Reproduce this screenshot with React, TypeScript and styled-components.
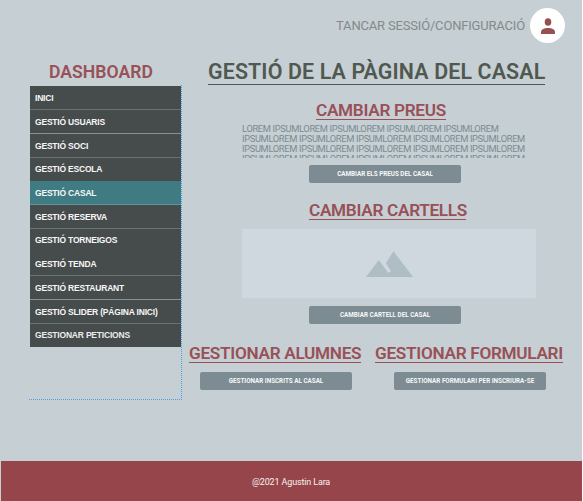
import React from "react";
import styled, { createGlobalStyle } from "styled-components";

const GlobalStyle = createGlobalStyle`
  *, *::before, *::after { box-sizing: border-box; }
  html, body { margin: 0; padding: 0; background: #fff; overflow: hidden; }
  body { font-family: Roboto, "Liberation Sans", sans-serif; }
  h1, h2, p, ul { margin: 0; padding: 0; }
`;

const Page = styled.div`
  width: 582px;
  height: 501px;
  display: flex;
  flex-direction: column;
  background: #c5cfd4;
  overflow: hidden;
  white-space: nowrap;
`;

const TopBar = styled.header`
  height: 51px;
  flex: none;
  display: flex;
  justify-content: flex-end;
  align-items: center;
  padding-right: 17px;
  gap: 5px;
`;

const SessionLink = styled.span`
  font-size: 13px;
  line-height: 16px;
  letter-spacing: -0.18px;
  color: #86898a;
`;

const Avatar = styled.div`
  width: 35px;
  height: 35px;
  border-radius: 50%;
  background: #fff;
  display: grid;
  place-items: center;
`;

const Body = styled.div`
  height: 410px;
  flex: none;
  display: flex;
  align-items: flex-start;
`;

const Sidebar = styled.aside`
  width: 153px;
  margin-left: 29px;
`;

const SidebarTitle = styled.h2`
  height: 34px;
  padding: 11px 9px 0 0;
  text-align: center;
  font-size: 17.6px;
  line-height: 21px;
  font-weight: 600;
  letter-spacing: 0.05px;
  color: #995056;
`;

const NavFrame = styled.nav`
  height: 315px;
  padding: 1px 0 0 1px;
  border-right: 1px dotted #4c9fe6;
  border-bottom: 1px dotted #4c9fe6;
`;

const NavList = styled.ul`
  list-style: none;
  display: grid;
  grid-template-rows: 24px 24px 24px 23px 24px 24px 23px 24px 24px 24px 23px;
`;

const NavItem = styled.li<{ $active?: boolean; $line?: string }>`
  display: flex;
  align-items: center;
  padding-left: 5px;
  background: ${(p) => (p.$active ? "#3e7b82" : "#464b4b")};
  border-bottom: 1px solid ${(p) => p.$line ?? "transparent"};
  font: bold 8.5px/12px "Liberation Sans", Arial, sans-serif;
  letter-spacing: -0.2px;
  color: ${(p) => (p.$line ? "#f7f7f7" : "#ececec")};
`;

const Main = styled.main`
  flex: 1;
  display: flex;
  flex-direction: column;
`;

const PageTitle = styled.h1`
  width: 337px;
  height: 25px;
  margin: 9px 0 0 26px;
  font-size: 21.4px;
  line-height: 24px;
  font-weight: 600;
  letter-spacing: 0.13px;
  color: #50584f;
  border-bottom: 1px solid #50584f;
`;

const Column = styled.div`
  width: 294px;
  margin-left: 60px;
  display: flex;
  flex-direction: column;
`;

const SectionTitle = styled.h2<{ $w: number; $indent?: number }>`
  width: ${(p) => p.$w}px;
  height: 20px;
  margin-left: ${(p) => p.$indent ?? 0}px;
  font-size: 17.2px;
  line-height: 21px;
  font-weight: 600;
  letter-spacing: -0.3px;
  color: #995056;
  border-bottom: 1px solid #995056;
`;

const Section = styled.section<{ $top: number }>`
  margin-top: ${(p) => p.$top}px;
`;

const Description = styled.p`
  width: 294px;
  height: 34px;
  margin: 4px 0 7px;
  overflow: hidden;
  font-size: 9.3px;
  line-height: 10px;
  letter-spacing: -0.33px;
  color: #7c8b91;
`;

const Button = styled.button<{ $indent: number }>`
  display: block;
  width: 152px;
  height: 18px;
  margin: 0 0 0 ${(p) => p.$indent}px;
  padding: 0;
  border: 0;
  border-radius: 2px;
  background: #7c8c92;
  color: #f7f9fa;
  font: 700 6.3px/18px Roboto, sans-serif;
  text-align: center;
`;

const Placeholder = styled.div`
  width: 294px;
  height: 69px;
  margin: 9px 0 8px;
  background: #cfd8df;
  display: grid;
  place-items: center;
`;

const ActionRow = styled.div`
  display: flex;
  gap: 14px;
  margin: 19px 0 0 7px;
`;

const Action = styled.section`
  display: grid;
  gap: 9px;
`;

const Footer = styled.footer`
  height: 40px;
  flex: none;
  margin-left: 1px;
  background: #96454a;
  color: #f6f1f1;
  font-size: 9px;
  line-height: 42px;
  letter-spacing: -0.15px;
  padding-right: 1px;
  text-align: center;
`;

const navItems: { label: string; line?: string; active?: boolean }[] = [
  { label: "INICI", line: "#6b7071" },
  { label: "GESTIÓ USUARIS", line: "#8b9092" },
  { label: "GESTIÓ SOCI", line: "#6b7071" },
  { label: "GESTIÓ ESCOLA", line: "#464b4b" },
  { label: "GESTIÓ CASAL", line: "#649299", active: true },
  { label: "GESTIÓ RESERVA", line: "#6b7071" },
  { label: "GESTIÓ TORNEIGOS", line: "#464b4b" },
  { label: "GESTIÓ TENDA", line: "#6b7071" },
  { label: "GESTIÓ RESTAURANT", line: "#8b9092" },
  { label: "GESTIÓ SLIDER (PÁGINA INICI)", line: "#6b7071" },
  { label: "GESTIONAR PETICIONS" },
];

const PersonIcon = () => (
  <svg width="14" height="16" viewBox="0 0 14 16" fill="#965050">
    <ellipse cx="7" cy="4" rx="3.3" ry="3.8" />
    <path d="M0 16v-2c0-2.600 3.600-4 7-4s7 1.400 7 4v2z" />
  </svg>
);

const MountainIcon = () => (
  <svg width="47" height="26" viewBox="0 0 47 26" fill="#afbdc4">
    <path d="M0 26 12.800 9 22 21.500Q23.500 22 25 20L19.800 12 27.500 0.300 47 26z" />
  </svg>
);

export default function App() {
  return (
    <>
      <GlobalStyle />
      <Page>
        <TopBar>
          <SessionLink>TANCAR SESSIÓ/CONFIGURACIÓ</SessionLink>
          <Avatar><PersonIcon /></Avatar>
        </TopBar>
        <Body>
          <Sidebar>
            <SidebarTitle>DASHBOARD</SidebarTitle>
            <NavFrame>
              <NavList>
                {navItems.map((item) => (
                  <NavItem key={item.label} $active={item.active} $line={item.line}>
                    {item.label}
                  </NavItem>
                ))}
              </NavList>
            </NavFrame>
          </Sidebar>
          <Main>
            <PageTitle>GESTIÓ DE LA PÀGINA DEL CASAL</PageTitle>
            <Column>
              <Section $top={15}>
                <SectionTitle $w={130} $indent={74}>CAMBIAR PREUS</SectionTitle>
                <Description>
                  LOREM IPSUMLOREM IPSUMLOREM IPSUMLOREM IPSUMLOREM<br />
                  IPSUMLOREM IPSUMLOREM IPSUMLOREM IPSUMLOREM IPSUMLOREM<br />
                  IPSUMLOREM IPSUMLOREM IPSUMLOREM IPSUMLOREM IPSUMLOREM<br />
                  IPSUMLOREM IPSUMLOREM IPSUMLOREM IPSUMLOREM IPSUMLOREM
                </Description>
                <Button $indent={67}>CAMBIAR ELS PREUS DEL CASAL</Button>
              </Section>
              <Section $top={17}>
                <SectionTitle $w={157} $indent={67}>CAMBIAR CARTELLS</SectionTitle>
                <Placeholder><MountainIcon /></Placeholder>
                <Button $indent={67}>CAMBIAR CARTELL DEL CASAL</Button>
              </Section>
            </Column>
            <ActionRow>
              <Action>
                <SectionTitle $w={172}>GESTIONAR ALUMNES</SectionTitle>
                <Button $indent={11}>GESTIONAR INSCRITS AL CASAL</Button>
              </Action>
              <Action>
                <SectionTitle $w={188}>GESTIONAR FORMULARI</SectionTitle>
                <Button $indent={19}>GESTIONAR FORMULARI PER INSCRIURA-SE</Button>
              </Action>
            </ActionRow>
          </Main>
        </Body>
        <Footer>@2021 Agustin Lara</Footer>
      </Page>
    </>
  );
}
